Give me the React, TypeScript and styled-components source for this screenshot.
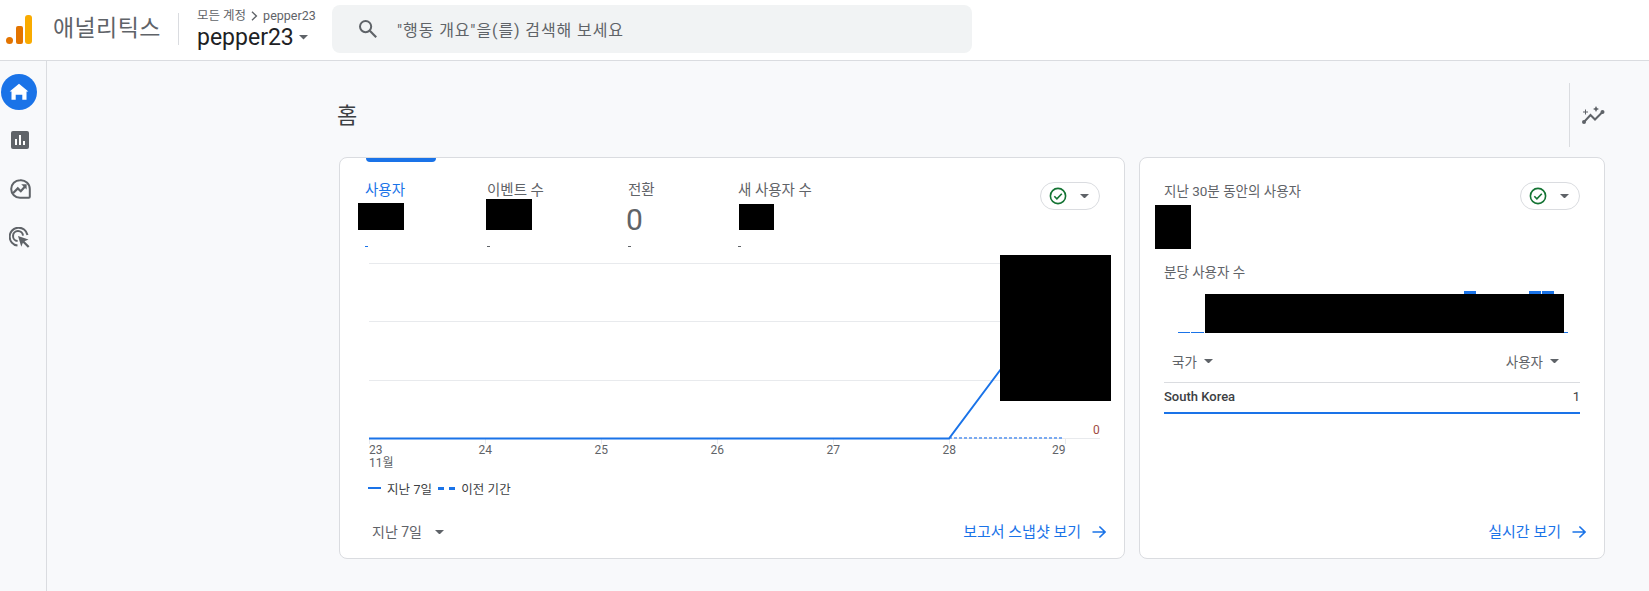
import styled, { createGlobalStyle } from 'styled-components';

const GlobalStyle = createGlobalStyle`
    html, body {
        margin: 0;
        padding: 0;
        height: 100%;
        background: #f8f9fb;
        font-family: Roboto, 'Noto Sans CJK KR', sans-serif;
        color: #5f6368;
    }
    * {
        box-sizing: border-box;
    }
`;

const tabs = [
    { label: '사용자', dash: '#1a73e8', active: true, width: 122, shift: -7, redact: [46, 27] },
    { label: '이벤트 수', width: 141, shift: -1, redact: [46, 31] },
    { label: '전환', width: 110, value: '0' },
    { label: '새 사용자 수', width: 100, shift: 1, redact: [35, 26] },
];

const ticks = [369, 485, 601, 717, 833, 949, 1065];

const tickX = (x: number, i: number) => {
    if (i === 0) return x;
    if (i === ticks.length - 1) return x - 13;
    return x - 6.5;
};

const Caret = ({ size = 8 }: { size?: number }) => (
    <svg width={size} height={size / 2} viewBox='0 0 10 5'>
        <path d='M0 0h10L5 5z' fill='#5f6368' />
    </svg>
);

const CheckChip = () => (
    <Chip>
        <svg width='18' height='18' viewBox='0 0 18 18' fill='none'>
            <circle cx='9' cy='9' r='7.6' stroke='#137333' strokeWidth='1.6' />
            <path d='M5.3 9.2l2.6 2.6 4.9-5' stroke='#137333' strokeWidth='1.6' />
        </svg>
        <Caret size={9} />
    </Chip>
);

const ArrowRight = () => (
    <svg width='14' height='14' viewBox='0 0 14 14' fill='none'>
        <path d='M0.5 7h12M7.4 1.5L13 7l-5.6 5.5' stroke='#1a73e8' strokeWidth='1.6' />
    </svg>
);

const App = () => {
    return (
        <Page>
            <GlobalStyle />
            <TopBar>
                <svg width='26' height='29' viewBox='0 0 26 29'>
                    <circle cx='3.5' cy='25.5' r='3.5' fill='#e37400' />
                    <rect x='10' y='11' width='7' height='18' rx='2' fill='#e37400' />
                    <rect x='19' y='0' width='7' height='29' rx='3' fill='#f9ab00' />
                </svg>
                <Brand>애널리틱스</Brand>
                <Account>
                    <Crumb>
                        모든 계정
                        <svg width='7' height='10' viewBox='0 0 7 10' fill='none'>
                            <path d='M1 .8L5.4 5 1 9.2' stroke='#5f6368' strokeWidth='1.4' />
                        </svg>
                        pepper23
                    </Crumb>
                    <AccountName>
                        pepper23
                        <Caret size={9} />
                    </AccountName>
                </Account>
                <Search>
                    <svg width='20' height='20' viewBox='0 0 20 20' fill='none'>
                        <circle cx='7.6' cy='7.6' r='5.6' stroke='#5f6368' strokeWidth='2' />
                        <path d='M11.8 11.8l6.4 6.4' stroke='#5f6368' strokeWidth='2.2' />
                    </svg>
                    <span>"행동 개요"을(를) 검색해 보세요</span>
                </Search>
            </TopBar>
            <Body>
                <Rail>
                    <HomeButton>
                        <svg width='22' height='22' viewBox='0 0 24 24'>
                            <path d='M8.4 20.5V15h7.2v5.5h4.6v-9h2L12 3 1.8 11.5h2v9z' fill='#fff' />
                        </svg>
                    </HomeButton>
                    <RailIcon>
                        <svg width='18' height='18' viewBox='0 0 18 18'>
                            <rect width='18' height='18' rx='2' fill='#5f6368' />
                            <path d='M4 8h2v6H4zM8 4h2v10H8zM12 10h2v4h-2z' fill='#fff' />
                        </svg>
                    </RailIcon>
                    <RailIcon>
                        <svg width='21' height='21' viewBox='0 0 21 21' fill='none'>
                            <path d='M10 1.2a8.8 8.8 0 1 0 0 17.6h8.8a1 1 0 0 0 1-1V10A8.8 8.8 0 0 0 10 1.2z' stroke='#5f6368' strokeWidth='2' />
                            <path d='M3.2 14l4.6-4.6 3 2.8 4.4-5' stroke='#5f6368' strokeWidth='2.2' />
                            <path d='M11.2 5.2h5.4v5.4z' fill='#5f6368' />
                        </svg>
                    </RailIcon>
                    <RailIcon>
                        <svg width='22' height='22' viewBox='0 0 22 22' fill='none'>
                            <path d='M18.5 8A9 9 0 1 0 8.5 18.6' stroke='#5f6368' strokeWidth='2' />
                            <path d='M14 8.6A5 5 0 1 0 8.6 14' stroke='#5f6368' strokeWidth='2' />
                            <path d='M9 9l10.5 3.6-4 1.6 5 5-1.6 1.6-5-5-1.6 4z' fill='#5f6368' />
                        </svg>
                    </RailIcon>
                </Rail>
                <Main>
                    <TitleRow>
                        <Title>홈</Title>
                        <InsightBox>
                            <svg width='23' height='19' viewBox='0 0 23 19'>
                                <path d='M2 16l6.5-7 4.5 4.5L20.5 6' fill='none' stroke='#5f6368' strokeWidth='2' />
                                <circle cx='2' cy='16' r='2' fill='#5f6368' />
                                <circle cx='20.5' cy='6' r='2' fill='#5f6368' />
                                <path d='M3 3.5h1v2h2v1H4v2H3v-2H1v-1h2z' fill='#5f6368' />
                                <path d='M14 0l1 2 2 1-2 1-1 2-1-2-2-1 2-1z' fill='#5f6368' />
                            </svg>
                        </InsightBox>
                    </TitleRow>
                    <Cards>
                        <OverviewCard>
                            <TabIndicator />
                            <TabsRow>
                                <Tabs>
                                    {tabs.map((tab) => (
                                        <Tab key={tab.label} $width={tab.width}>
                                            <TabLabel $active={tab.active}>{tab.label}</TabLabel>
                                            <TabValue>
                                                {tab.redact ? (
                                                    <Redacted
                                                        $w={tab.redact[0]}
                                                        $h={tab.redact[1]}
                                                        $shift={tab.shift}
                                                    />
                                                ) : (
                                                    <ZeroValue>{tab.value}</ZeroValue>
                                                )}
                                            </TabValue>
                                            <TabDash $color={tab.dash} />
                                        </Tab>
                                    ))}
                                </Tabs>
                                <CheckChip />
                            </TabsRow>
                            <ChartWrap>
                                <svg width='784' height='220' viewBox='340 255 784 220'>
                                    {[263, 321, 380, 438].map((y) => (
                                        <line key={y} x1='369' x2='1100' y1={y + 0.5} y2={y + 0.5} stroke='#e8eaed' />
                                    ))}
                                    {ticks.map((x) => (
                                        <line key={x} x1={x + 0.5} x2={x + 0.5} y1='438' y2='444' stroke='#e8eaed' />
                                    ))}
                                    <polyline
                                        points='949,438 1064,438'
                                        fill='none'
                                        stroke='#7baaf0'
                                        strokeWidth='2'
                                        strokeDasharray='3 2'
                                    />
                                    <polyline
                                        points='369,438.5 949,438.5 1001,369'
                                        fill='none'
                                        stroke='#1a73e8'
                                        strokeWidth='2'
                                    />
                                    {ticks.map((x, i) => (
                                        <AxisText key={x} x={tickX(x, i)} y='454'>
                                            {23 + i}
                                        </AxisText>
                                    ))}
                                    <AxisText x='369' y='467'>11월</AxisText>
                                    <ZeroTick x='1093' y='434'>0</ZeroTick>
                                </svg>
                                <ChartRedaction />
                            </ChartWrap>
                            <Legend>
                                <LegendItem>
                                    <SolidSwatch />
                                    지난 7일
                                </LegendItem>
                                <LegendItem>
                                    <DashSwatch>
                                        <i />
                                        <i />
                                    </DashSwatch>
                                    이전 기간
                                </LegendItem>
                            </Legend>
                            <Footer>
                                <DateSelect>
                                    지난 7일
                                    <Caret size={9} />
                                </DateSelect>
                                <FooterLink>
                                    보고서 스냅샷 보기
                                    <ArrowRight />
                                </FooterLink>
                            </Footer>
                        </OverviewCard>
                        <RealtimeCard>
                            <RealtimeHead>
                                <div>
                                    <SmallLabel>지난 30분 동안의 사용자</SmallLabel>
                                    <RealtimeRedacted />
                                </div>
                                <CheckChip />
                            </RealtimeHead>
                            <PerMinute>분당 사용자 수</PerMinute>
                            <BarsWrap>
                                <svg width='416' height='55' viewBox='1164 285 416 55'>
                                    <path d='M1178 332.5h12M1191 332.5h13' stroke='#1a73e8' />
                                    <rect x='1464' y='291' width='12' height='4' fill='#1a73e8' />
                                    <rect x='1529' y='291' width='12' height='4' fill='#1a73e8' />
                                    <rect x='1542' y='291' width='12' height='4' fill='#1a73e8' />
                                    <path d='M1564 332.5h4' stroke='#1a73e8' />
                                </svg>
                                <BarsRedaction />
                            </BarsWrap>
                            <TableHead>
                                <HeadCell>
                                    국가
                                    <Caret size={9} />
                                </HeadCell>
                                <HeadCell>
                                    사용자
                                    <Caret size={9} />
                                </HeadCell>
                            </TableHead>
                            <TableRow>
                                <span>South Korea</span>
                                <span>1</span>
                            </TableRow>
                            <RealtimeFooter>
                                <FooterLink>
                                    실시간 보기
                                    <ArrowRight />
                                </FooterLink>
                            </RealtimeFooter>
                        </RealtimeCard>
                    </Cards>
                </Main>
            </Body>
        </Page>
    );
};

const Page = styled.div`
    height: 100vh;
    overflow: hidden;
    display: flex;
    flex-direction: column;
`;

const TopBar = styled.header`
    height: 61px;
    flex: none;
    background: #fff;
    border-bottom: 1px solid #dadce0;
    display: flex;
    align-items: center;
    padding-left: 6px;
    padding-bottom: 2px;
`;

const Brand = styled.div`
    margin-left: 21px;
    width: 126px;
    height: 32px;
    border-right: 1px solid #dadce0;
    font-size: 23px;
    letter-spacing: 0.4px;
    line-height: 31px;
    color: #5f6368;
`;

const Account = styled.div`
    margin-left: 18px;
    width: 135px;
    padding-top: 1px;
`;

const Crumb = styled.div`
    display: flex;
    align-items: center;
    gap: 5px;
    font-size: 12.5px;
    line-height: 16px;
    color: #5f6368;
`;

const AccountName = styled.div`
    display: flex;
    align-items: center;
    gap: 5px;
    font-size: 23px;
    line-height: 28px;
    color: #202124;
`;

const Search = styled.div`
    width: 640px;
    height: 48px;
    background: #f1f3f4;
    border-radius: 8px;
    display: flex;
    align-items: center;
    gap: 19px;
    padding-left: 26px;
    font-size: 16px;
    letter-spacing: 0.9px;
    color: #5f6368;
`;

const Body = styled.div`
    flex: 1;
    display: flex;
    min-height: 0;
`;

const Rail = styled.nav`
    width: 47px;
    flex: none;
    border-right: 1px solid #dadce0;
    display: flex;
    flex-direction: column;
    align-items: center;
    padding: 13px 8px 0 0;
`;

const HomeButton = styled.div`
    width: 36px;
    height: 36px;
    border-radius: 50%;
    background: #1a73e8;
    display: flex;
    align-items: center;
    justify-content: center;
    margin-left: 0;
`;

const RailIcon = styled.div`
    width: 36px;
    height: 22px;
    margin: 0 0 27px 2px;
    display: flex;
    align-items: center;
    justify-content: center;
    &:nth-child(2) {
        margin-top: 19px;
    }
`;

const Main = styled.main`
    flex: 1;
    min-width: 0;
    padding-left: 292px;
`;

const TitleRow = styled.div`
    height: 96px;
    display: flex;
    justify-content: space-between;
    align-items: flex-start;
    padding-top: 22px;
`;

const Title = styled.h1`
    margin: 0 0 0 -2px;
    font-size: 22px;
    line-height: 66px;
    font-weight: 400;
    color: #3c4043;
`;

const InsightBox = styled.div`
    width: 80px;
    height: 64px;
    border-left: 1px solid #dadce0;
    padding: 23px 0 0 12px;
`;

const Cards = styled.div`
    display: flex;
    gap: 14px;
`;

const Card = styled.section`
    position: relative;
    height: 402px;
    background: #fff;
    border: 1px solid #dadce0;
    border-radius: 8px;
    display: flex;
    flex-direction: column;
`;

const OverviewCard = styled(Card)`
    width: 786px;
`;

const RealtimeCard = styled(Card)`
    width: 466px;
    padding: 24px 24px 0 24px;
`;

const TabIndicator = styled.div`
    position: absolute;
    top: 0;
    left: 26px;
    width: 70px;
    height: 4px;
    background: #1a73e8;
    border-radius: 0 0 4px 4px;
`;

const TabsRow = styled.div`
    height: 97px;
    flex: none;
    display: flex;
    justify-content: space-between;
    align-items: flex-start;
    padding: 24px 24px 0 25px;
`;

const Tabs = styled.div`
    display: flex;
`;

const Tab = styled.div<{ $width: number }>`
    width: ${(p) => p.$width}px;
`;

const TabLabel = styled.div<{ $active?: boolean }>`
    font-size: 14.5px;
    line-height: 18px;
    white-space: nowrap;
    color: ${(p) => (p.$active ? '#1a73e8' : '#5f6368')};
`;

const TabValue = styled.div`
    height: 30px;
    display: flex;
    align-items: flex-end;
`;

const Redacted = styled.div<{ $w: number; $h: number; $shift?: number }>`
    width: ${(p) => p.$w}px;
    height: ${(p) => p.$h}px;
    margin-left: ${(p) => p.$shift || 0}px;
    background: #000;
`;

const ZeroValue = styled.div`
    font-size: 30px;
    line-height: 28px;
    color: #5f6368;
    margin: 0 0 -4px -2px;
`;

const TabDash = styled.div<{ $color?: string }>`
    width: 3px;
    height: 1px;
    margin-top: 16px;
    background: ${(p) => p.$color || '#5f6368'};
`;

const ChartWrap = styled.div`
    position: relative;
    height: 220px;
    flex: none;
    svg {
        display: block;
    }
`;

const AxisText = styled.text`
    font-family: Roboto, 'Noto Sans CJK KR', sans-serif;
    font-size: 12px;
    fill: #5f6368;
`;

const ZeroTick = styled(AxisText)`
    fill: #a04a3f;
`;

const ChartRedaction = styled.div`
    position: absolute;
    top: 0;
    left: 660px;
    width: 111px;
    height: 146px;
    background: #000;
`;

const Legend = styled.div`
    display: flex;
    gap: 6px;
    margin-top: 4px;
    padding-left: 28px;
    height: 18px;
`;

const LegendItem = styled.div`
    display: flex;
    align-items: center;
    gap: 6px;
    font-size: 12.5px;
    letter-spacing: 0.1px;
    color: #3c4043;
`;

const SolidSwatch = styled.i`
    width: 13px;
    height: 2px;
    background: #1a73e8;
`;

const DashSwatch = styled.span`
    display: flex;
    gap: 5px;
    i {
        width: 6px;
        height: 3px;
        background: #1a73e8;
    }
`;

const Footer = styled.div`
    margin-top: auto;
    height: 52px;
    display: flex;
    justify-content: space-between;
    align-items: flex-start;
    padding: 17px 18px 0 32px;
`;

const DateSelect = styled.div`
    display: flex;
    align-items: center;
    gap: 13px;
    font-size: 14px;
    line-height: 18px;
    color: #5f6368;
`;

const FooterLink = styled.div`
    display: flex;
    align-items: center;
    gap: 11px;
    font-size: 15px;
    line-height: 18px;
    color: #1a73e8;
`;

const Chip = styled.div`
    width: 60px;
    height: 28px;
    flex: none;
    border: 1px solid #dadce0;
    border-radius: 14px;
    display: flex;
    align-items: center;
    gap: 13px;
    padding-left: 8px;
    background: #fff;
`;

const RealtimeHead = styled.div`
    display: flex;
    justify-content: space-between;
    align-items: flex-start;
`;

const SmallLabel = styled.div`
    font-size: 13.5px;
    line-height: 18px;
    color: #5f6368;
`;

const RealtimeRedacted = styled.div`
    width: 36px;
    height: 44px;
    margin: 5px 0 0 -9px;
    background: #000;
`;

const PerMinute = styled(SmallLabel)`
    margin-top: 14px;
`;

const BarsWrap = styled.div`
    position: relative;
    height: 55px;
    margin-top: 4px;
    svg {
        display: block;
    }
`;

const BarsRedaction = styled.div`
    position: absolute;
    top: 9px;
    left: 41px;
    width: 359px;
    height: 39px;
    background: #000;
`;

const TableHead = styled.div`
    height: 43px;
    border-bottom: 1px solid #dadce0;
    display: flex;
    justify-content: space-between;
    padding: 12px 21px 0 8px;
`;

const HeadCell = styled.div`
    display: flex;
    align-items: center;
    gap: 7px;
    height: 18px;
    font-size: 13.5px;
    color: #5f6368;
`;

const TableRow = styled.div`
    height: 31px;
    padding-bottom: 2px;
    border-bottom: 2px solid #1a73e8;
    display: flex;
    justify-content: space-between;
    align-items: center;
    font-size: 13px;
    font-weight: 500;
    color: #3c4043;
    span:last-child {
        font-weight: 400;
    }
`;

const RealtimeFooter = styled.div`
    margin-top: auto;
    height: 52px;
    display: flex;
    justify-content: flex-end;
    align-items: flex-start;
    padding-top: 17px;
    margin-right: -6px;
`;

export default App;
